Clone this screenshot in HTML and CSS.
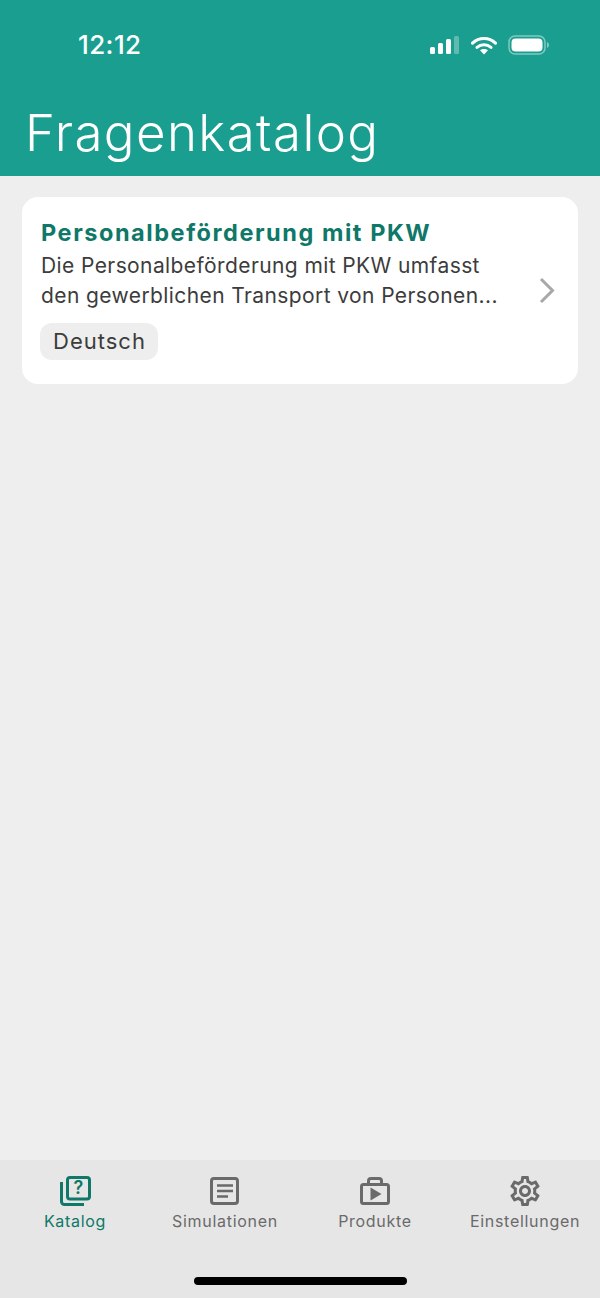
FILE: index.html
```html
<!DOCTYPE html>
<html lang="de">
<head>
  <meta charset="UTF-8" />
  <meta name="viewport" content="width=device-width, initial-scale=1" />
  <title>Fragenkatalog</title>
  <link rel="stylesheet" href="styles.css">
</head>
<body>
<div class="app">
  <header class="top">
    <div class="status">
      <span class="time">12:12</span>
      <div class="status-icons">
        <svg class="signal" width="30" height="20" viewBox="0 0 30 20">
          <rect x="1" y="12" width="5" height="7" rx="1.5" fill="#fff"/>
          <rect x="9" y="8" width="5" height="11" rx="1.5" fill="#fff"/>
          <rect x="17" y="4" width="5" height="15" rx="1.5" fill="#fff"/>
          <rect x="25" y="1" width="5" height="18" rx="1.5" fill="#fff" opacity=".3"/>
        </svg>
        <svg class="wifi" width="26" height="19" viewBox="0 0 26 19">
          <path d="M1.5 7.2C8 1 18 1 24.5 7.2" fill="none" stroke="#fff" stroke-width="3" stroke-linecap="round"/>
          <path d="M6 11.4c4-3.6 10-3.6 14 0" fill="none" stroke="#fff" stroke-width="3" stroke-linecap="round"/>
          <path d="M13 18.6l-4-4.3c2.3-1.8 5.7-1.8 8 0z" fill="#fff"/>
        </svg>
        <svg class="battery" width="42" height="20" viewBox="0 0 42 20">
          <rect x="1" y="1" width="36" height="18" rx="6" fill="none" stroke="#fff" stroke-opacity=".45" stroke-width="1.5"/>
          <rect x="3.5" y="3.5" width="31" height="13" rx="4" fill="#fff"/>
          <path d="M39 7v6c1.2-.5 2-1.7 2-3s-.8-2.500-2-3z" fill="#fff" opacity=".45"/>
        </svg>
      </div>
    </div>
    <h1>Fragenkatalog</h1>
  </header>

  <main class="content">
    <div class="card">
      <div class="card-text">
        <h2>Personalbeförderung mit PKW</h2>
        <p>Die Personalbeförderung mit PKW umfasst<br>den gewerblichen Transport von Personen...</p>
        <span class="tag">Deutsch</span>
      </div>
      <svg class="chevron" width="16" height="27" viewBox="0 0 16 27">
        <path d="M2 2l11.500 11.500L2 25" fill="none" stroke="#a8a8a8" stroke-width="3"/>
      </svg>
    </div>
  </main>

  <nav class="tabs">
    <div class="tab-row">
      <div class="tab active">
        <svg width="36" height="36" viewBox="0 0 36 36">
          <path d="M4.500 9v19.500a3 3 0 0 0 3 3H27" fill="none" stroke="currentColor" stroke-width="3"/>
          <rect x="10.500" y="4.500" width="22" height="21.500" rx="2.500" fill="none" stroke="currentColor" stroke-width="3"/>
          <text x="21.500" y="21" text-anchor="middle" class="q">?</text>
        </svg>
        <span>Katalog</span>
      </div>
      <div class="tab">
        <svg width="36" height="36" viewBox="0 0 36 36">
          <rect x="4.500" y="5.500" width="26" height="25" rx="2.500" fill="none" stroke="currentColor" stroke-width="3"/>
          <path d="M10 12.500h16M10 18h16M10 23.500h11" fill="none" stroke="currentColor" stroke-width="2.600"/>
        </svg>
        <span>Simulationen</span>
      </div>
      <div class="tab">
        <svg width="36" height="36" viewBox="0 0 36 36">
          <rect x="4.500" y="11.500" width="27" height="19" rx="2" fill="none" stroke="currentColor" stroke-width="3"/>
          <path d="M11.500 11.500V8a2.500 2.500 0 0 1 2.500-2.500h8a2.500 2.500 0 0 1 2.500 2.500v3.500" fill="none" stroke="currentColor" stroke-width="3"/>
          <path d="M13.500 14.500v13l11-6.500z" fill="currentColor"/>
        </svg>
        <span>Produkte</span>
      </div>
      <div class="tab">
        <svg width="36" height="36" viewBox="0 0 24 24">
          <path fill="currentColor" d="M19.430 12.980c.04-.32.07-.64.07-.98 0-.34-.03-.66-.07-.98l2.110-1.650c.19-.15.24-.42.12-.64l-2-3.460c-.09-.16-.26-.25-.44-.25-.06 0-.12.01-.17.03l-2.490 1c-.52-.4-1.080-.73-1.690-.98l-.38-2.650C14.460 2.180 14.250 2 14 2h-4c-.25 0-.46.18-.49.42l-.38 2.650c-.61.25-1.170.59-1.690.98l-2.490-1c-.06-.02-.12-.03-.18-.03-.17 0-.34.09-.43.25l-2 3.460c-.13.22-.07.49.12.64l2.110 1.650c-.04.32-.07.65-.07.98 0 .33.03.66.07.98l-2.110 1.650c-.19.15-.24.42-.12.64l2 3.460c.09.16.26.25.44.25.06 0 .12-.01.17-.03l2.490-1c.52.4 1.080.73 1.690.98l.38 2.650c.03.24.24.42.49.42h4c.25 0 .46-.18.49-.42l.38-2.650c.61-.25 1.170-.59 1.690-.98l2.490 1c.06.02.12.03.18.03.17 0 .34-.09.43-.25l2-3.460c.12-.22.07-.49-.12-.64l-2.110-1.650zm-1.980-1.710c.04.31.05.52.05.73 0 .21-.02.43-.05.73l-.14 1.130.89.7 1.080.84-.7 1.210-1.270-.51-1.040-.42-.9.68c-.43.32-.84.56-1.250.73l-1.060.43-.16 1.130-.2 1.350h-1.400l-.19-1.350-.16-1.130-1.060-.43c-.43-.18-.83-.41-1.230-.71l-.91-.7-1.060.43-1.270.51-.7-1.210 1.080-.84.89-.7-.14-1.130c-.03-.31-.05-.54-.05-.74s.02-.43.05-.73l.14-1.130-.89-.7-1.080-.84.7-1.210 1.270.51 1.040.42.9-.68c.43-.32.84-.56 1.250-.73l1.060-.43.16-1.130.2-1.350h1.390l.19 1.350.16 1.130 1.060.43c.43.18.83.41 1.230.71l.91.7 1.060-.43 1.270-.51.7 1.210-1.070.85-.89.7.14 1.130zM12 8c-2.210 0-4 1.790-4 4s1.790 4 4 4 4-1.790 4-4-1.790-4-4-4zm0 6c-1.100 0-2-.9-2-2s.9-2 2-2 2 .9 2 2-.9 2-2 2z"/>
        </svg>
        <span>Einstellungen</span>
      </div>
    </div>
    <div class="home-bar"></div>
  </nav>
</div>
</body>
</html>
```

FILE: styles.css
```css
* { box-sizing: border-box; }
html, body {
  margin: 0;
  height: 100%;
}
body {
  font-family: Inter, "Noto Sans", sans-serif;
  background: #eeeeee;
  color: #3c3c3c;
}
.app {
  display: flex;
  flex-direction: column;
  height: 1298px;
  overflow: hidden;
}
.top {
  height: 176px;
  background: #1a9e8f;
  color: #fff;
  padding: 0 25px;
}
.status {
  display: flex;
  justify-content: space-between;
  align-items: center;
  height: 90px;
  padding: 0 25px 0 53px;
}
.time {
  margin-top: -2px;
  font-size: 26px;
  font-weight: 500;
  letter-spacing: 0.4px;
}
.status-icons {
  display: flex;
  align-items: center;
  gap: 12px;
}
.battery {
  margin-left: -1px;
}
.top h1 {
  margin: 0;
  font-size: 51px;
  font-weight: 300;
  line-height: 86px;
  letter-spacing: 1.4px;
}
.content {
  flex: 1;
  padding: 21px 22px;
}
.card {
  display: flex;
  align-items: center;
  justify-content: space-between;
  height: 187px;
  background: #fff;
  border-radius: 16px;
  padding: 0 23px 0 19px;
}
.card-text {
  padding-bottom: 4px;
}
.card h2 {
  margin: 0;
  font-size: 23.5px;
  font-weight: 700;
  line-height: 30px;
  letter-spacing: 1.55px;
  color: #0f7868;
}
.card p {
  margin: 3px 0 12px;
  font-size: 21px;
  line-height: 30px;
  letter-spacing: 0.4px;
}
.tag {
  display: inline-block;
  height: 37px;
  margin-left: -1px;
  padding: 0 12px 0 13px;
  border-radius: 12px;
  background: #eeeeee;
  font-size: 22px;
  line-height: 37px;
  letter-spacing: 1px;
}
.tabs {
  height: 138px;
  background: #e6e6e6;
}
.tab-row {
  display: grid;
  grid-template-columns: repeat(4, 1fr);
  padding-top: 13px;
}
.tab {
  display: flex;
  flex-direction: column;
  align-items: center;
  color: #6a6a6a;
}
.tab span {
  font-size: 16px;
  line-height: 24px;
  letter-spacing: 0.7px;
}
.tab.active {
  color: #0f7868;
}
.q {
  font-family: Inter, sans-serif;
  font-size: 18px;
  font-weight: 600;
  fill: currentColor;
}
.home-bar {
  width: 213px;
  height: 8px;
  margin: 44px auto 0;
  border-radius: 4px;
  background: #000;
}
```
